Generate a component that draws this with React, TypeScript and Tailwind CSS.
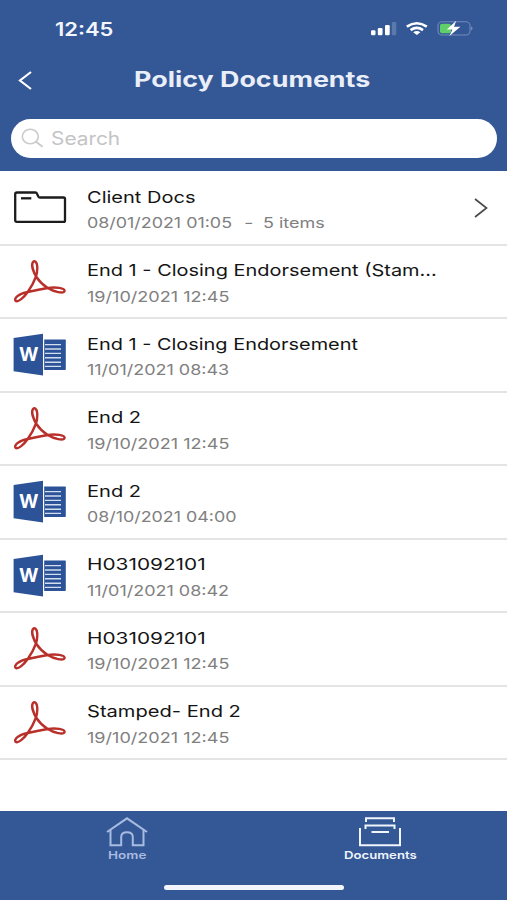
import { useLayoutEffect, useRef, useState } from "react";

type FitTextProps = { text: string; width: number; className?: string };

/** One line of wide type, stretched horizontally so that it fills `width`. */
function FitText({ text, width, className = "" }: FitTextProps) {
  const ref = useRef<HTMLSpanElement>(null);
  const [scale, setScale] = useState(1);
  useLayoutEffect(() => {
    const fit = () => {
      if (ref.current && ref.current.offsetWidth > 0) setScale(width / ref.current.offsetWidth);
    };
    fit();
    document.fonts?.ready.then(fit);
  }, [text, width]);
  return (
    <span className={`block shrink-0 ${className}`} style={{ width }}>
      <span ref={ref} className="inline-block origin-left whitespace-pre" style={{ transform: `scaleX(${scale})` }}>
        {text}
      </span>
    </span>
  );
}

function FolderIcon() {
  return (
    <svg className="block h-[44px] w-[54px]" viewBox="0 0 54 44" fill="none" stroke="#1c1c1c" strokeWidth="2.3">
      <path d="M2.2 7.2q0-1.7 1.8-1.7h18.4q1.1 0 1.5 1l1.4 3q.5 1 1.6 1h23.7q1.4 0 1.4 1.4v21.500q0 1.500-1.500 1.500H3.800q-1.600 0-1.600-1.600z" />
      <path d="M8 11.300h10.300" />
    </svg>
  );
}

function PdfIcon() {
  return (
    <svg className="block h-[44px] w-[54px]" viewBox="0 0 54 44" fill="none" stroke="#b9302a" strokeWidth="2.400" strokeLinecap="round" strokeLinejoin="round">
      <path d="M23 17.500C21 23 18 28.500 14.700 33 11 38.500 5 43.500 2.700 42 .5 39.500 5.500 34.500 14.700 33 21 31.500 28 30 34.700 29 43 27.500 51.800 29.300 51.600 32 50.800 35 41 33 34.700 29 30 26 26 22 23 17.500 20 12 18.200 5.500 20 3 21.500 1.300 23.800 2.800 24.200 7 24.500 11 24 14.500 23 17.500z" />
    </svg>
  );
}

function WordIcon() {
  return (
    <svg className="block h-[44px] w-[54px]" viewBox="0 0 54 44">
      <path d="M31.200 7.500H52q.8 0 .8.800V37.200q0 .8-.8.800H31.200z" fill="#2c5298" />
      <path d="M32 12.600H48M32 17H48M32 21.400H48M32 25.800H48M32 30.200H48M32 34.400H48" stroke="#d4def0" strokeWidth="1.400" />
      <path d="M.6 6 30 1.700V43.500L.6 39.200z" fill="#2c5298" />
      <text x="6" y="29.300" fill="#fff" fontFamily="Inter, sans-serif" fontSize="19" fontWeight="700" textLength="19.500" lengthAdjust="spacingAndGlyphs">
        W
      </text>
    </svg>
  );
}

type Kind = "folder" | "pdf" | "word";
type Doc = { kind: Kind; title: string; titleWidth: number; date: string; dateWidth: number; items?: string };

const DOCS: Doc[] = [
  { kind: "folder", title: "Client Docs", titleWidth: 108, date: "08/01/2021 01:05", dateWidth: 145.5, items: "5 items" },
  { kind: "pdf", title: "End 1 - Closing Endorsement (Stam...", titleWidth: 349.5, date: "19/10/2021 12:45", dateWidth: 142 },
  { kind: "word", title: "End 1 - Closing Endorsement", titleWidth: 271.5, date: "11/01/2021 08:43", dateWidth: 142.5 },
  { kind: "pdf", title: "End 2", titleWidth: 53.5, date: "19/10/2021 12:45", dateWidth: 142 },
  { kind: "word", title: "End 2", titleWidth: 53.5, date: "08/10/2021 04:00", dateWidth: 149 },
  { kind: "word", title: "H031092101", titleWidth: 118.5, date: "11/01/2021 08:42", dateWidth: 142.5 },
  { kind: "pdf", title: "H031092101", titleWidth: 118.5, date: "19/10/2021 12:45", dateWidth: 142 },
  { kind: "pdf", title: "Stamped- End 2", titleWidth: 153.5, date: "19/10/2021 12:45", dateWidth: 142 },
];

function Row({ doc }: { doc: Doc }) {
  return (
    <li className="flex h-[73.5px] items-start border-b-2 border-[#e4e4e6] pl-[13px] pr-[18px]">
      <div className="mt-[13px] w-[73.5px] shrink-0">
        {doc.kind === "folder" && <div className="mt-[2px]"><FolderIcon /></div>}
        {doc.kind === "pdf" && <PdfIcon />}
        {doc.kind === "word" && <WordIcon />}
      </div>
      <div className="flex-1 pt-[11.500px]">
        <FitText text={doc.title} width={doc.titleWidth} className="text-[16.500px] leading-[26px] text-[#141414]" />
        <div className="flex pt-[0.500px] text-[14.500px] leading-[26px] text-[#808080]">
          <FitText text={doc.date} width={doc.dateWidth} />
          {doc.items && (
            <>
              <FitText text="-" width={10} className="ml-[12px]" />
              <FitText text={doc.items} width={62} className="ml-[9px]" />
            </>
          )}
        </div>
      </div>
      {doc.kind === "folder" && (
        <svg className="mt-[25px] h-[22px] w-4" viewBox="0 0 16 22" fill="none" stroke="#4a4a4a" strokeWidth="1.700">
          <path d="M2 2l11.500 9L2 20" />
        </svg>
      )}
    </li>
  );
}

function StatusBar() {
  return (
    <div className="flex h-[56px] items-start justify-between pl-[54.500px] pr-[34px] pt-[16px]">
      <FitText text="12:45" width={58.5} className="text-[18px] font-semibold leading-[27px] text-[#f3f6fc]" />
      <svg className="h-[24px] w-[103px]" viewBox="370 16 103 24">
        <g fill="#fff">
          <rect x="371" y="30.200" width="4.500" height="5" rx="1.200" />
          <rect x="377.800" y="28" width="4.700" height="7.200" rx="1.200" />
          <rect x="385" y="25" width="4.700" height="10.200" rx="1.200" />
          <rect x="391.800" y="22" width="4.500" height="13.200" rx="1.200" opacity=".2" />
        </g>
        <g fill="none" stroke="#fff" strokeWidth="2.600">
          <path d="M406.800 26.600q10-6.800 20 0" />
          <path d="M410.600 30.100q6.200-4.300 12.400 0" />
        </g>
        <path d="M413.200 32.200q3.600-2.400 7.200 0l-3.600 2.900z" fill="#fff" />
        <rect x="438" y="21.800" width="32" height="13.200" rx="4" fill="none" stroke="#7189bb" strokeWidth="1.100" />
        <path d="M471.200 26.300q2.500 2.100 0 4.300z" fill="#8298c6" />
        <rect x="440" y="23.700" width="11" height="9.600" rx="2" fill="#5fcf69" />
        <path d="M456.200 20.800 446.800 29.600h5.600l-3 6.400 11-9.300h-6.400z" fill="#fff" />
      </svg>
    </div>
  );
}

export default function App() {
  return (
    <div className="flex h-[900px] w-[507px] flex-col overflow-hidden bg-white font-['Inter',sans-serif]">
      <header className="h-[171px] shrink-0 bg-[#345896]">
        <StatusBar />
        <div className="flex h-[63px] items-start pl-[18px]">
          <svg className="mt-[14px] h-[22px] w-4" viewBox="0 0 16 22" fill="none" stroke="#fff" strokeWidth="2.200">
            <path d="M13 2 2 10.500 13 19" />
          </svg>
          <FitText text="Policy Documents" width={236.5} className="ml-[100px] mt-[9px] text-[21px] font-bold leading-[30px] text-[#e9eef8]" />
        </div>
        <div className="ml-[11px] flex h-[38.500px] w-[486px] items-center rounded-[20px] bg-white pl-[10px]">
          <svg className="h-5 w-[24px]" viewBox="0 0 24 20" fill="none" stroke="#cbcbcd" strokeWidth="1.600">
            <ellipse cx="9.300" cy="8.500" rx="8" ry="7.200" />
            <path d="m15 13.800 6.500 5" strokeWidth="2" />
          </svg>
          <FitText text="Search" width={69.5} className="ml-[5.500px] pt-[2px] text-[18px] leading-[26px] text-[#c4c4c6]" />
        </div>
      </header>

      <main className="flex-1 pt-[1px]">
        <ul>
          {DOCS.map((doc, i) => (
            <Row key={i} doc={doc} />
          ))}
        </ul>
      </main>

      <footer className="flex h-[89px] shrink-0 flex-col bg-[#345896]">
        <nav className="flex h-[74px] items-start">
          <div className="flex w-1/2 flex-col items-center pt-[5px] text-[#a8bbe0]">
            <svg className="h-[32px] w-[42px]" viewBox="0 0 42 32" fill="none" stroke="currentColor" strokeWidth="2">
              <path d="M1 16 21 2.300 41 16" />
              <path d="M4.500 14v15.200H15.200V21q0-4.700 5.800-4.700T26.800 21v8.200H37.500V14" />
            </svg>
            <FitText text="Home" width={38} className="text-[11px] font-semibold leading-[15px]" />
          </div>
          <div className="flex w-1/2 flex-col items-center pt-[5px] text-[#f0f4fd]">
            <svg className="h-[32px] w-[44px]" viewBox="0 0 44 32" fill="none" stroke="currentColor" strokeWidth="2">
              <path d="M2 12v17.300h40V12" />
              <path d="M8 6V2.300h28V6M7.500 13V9.500h29V13" />
              <path d="M13.500 16h17.500" />
            </svg>
            <FitText text="Documents" width={73} className="text-[11px] font-semibold leading-[15px]" />
          </div>
        </nav>
        <div className="ml-[164px] h-[5px] w-[180px] rounded-full bg-[#f2f5fc]" />
      </footer>
    </div>
  );
}
